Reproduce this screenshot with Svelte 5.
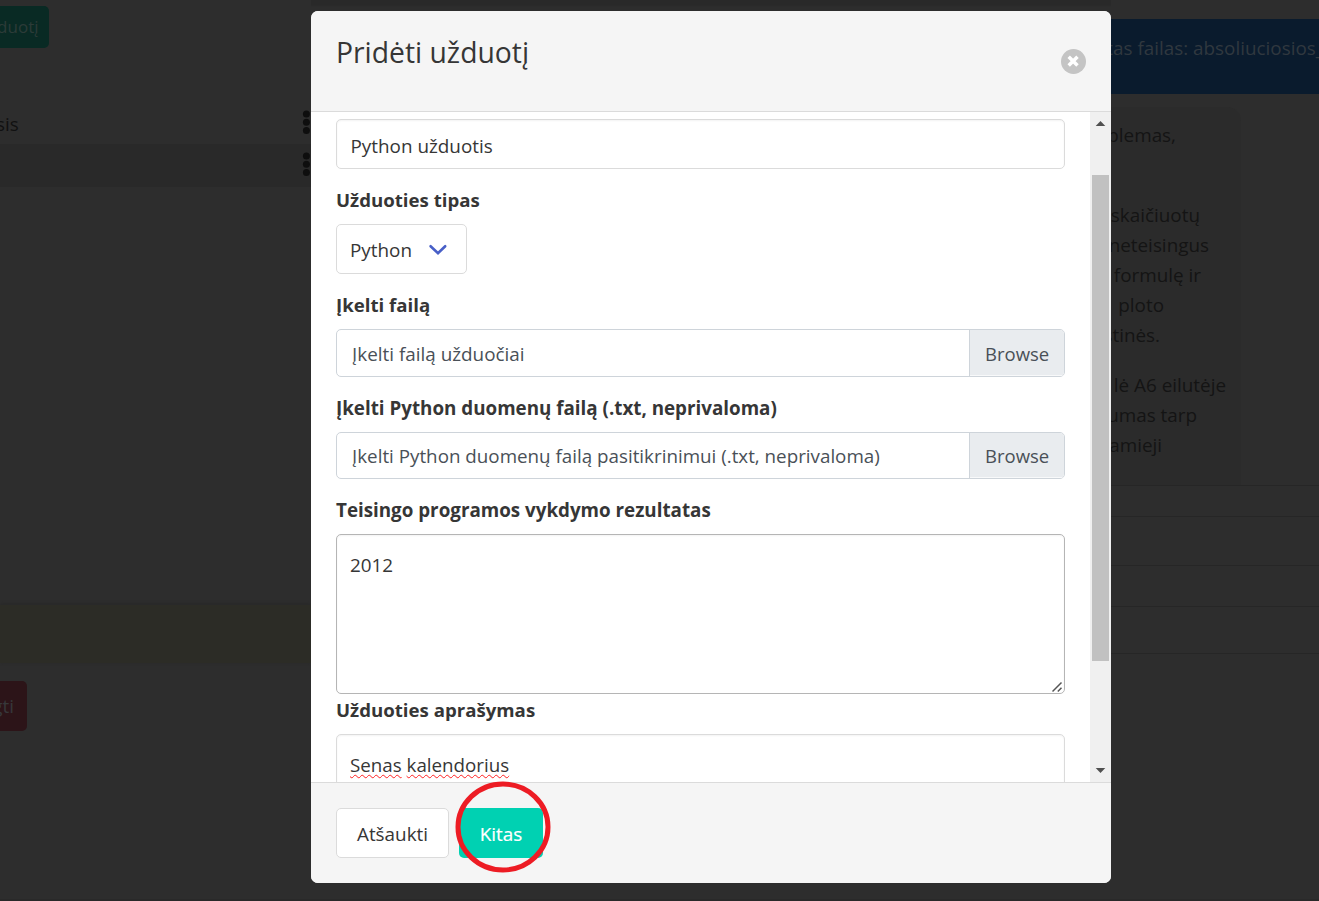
<script>
  let name = $state('Python užduotis');
  let result = $state('2012');
  const lines = [
    { text: 'problemas,', end: 1176, top: 0 },
    { text: 'skaičiuotų', end: 1200, top: 50 },
    { text: 'neteisingus', end: 1209, top: 0 },
    { text: 'formulę ir', end: 1201, top: 0 },
    { text: 'ploto', end: 1164, top: 0 },
    { text: 'stinės.', end: 1160, top: 0 },
    { text: 'lė A6 eilutėje', end: 1226, top: 20 },
    { text: 'umas tarp', end: 1197, top: 0 },
    { text: 'amieji', end: 1162, top: 0 }
  ];
  const rows = [31, 49, 41, 47];
</script>

{#snippet dots()}
  <svg class="dots" width="9" height="26" viewBox="0 0 9 26">
    <circle cx="4.4" cy="4.9" r="3.5" /><circle cx="4.4" cy="13.2" r="3.5" /><circle cx="4.4" cy="21.5" r="3.5" />
  </svg>
{/snippet}

<div class="screen">
  <aside class="left">
    <div class="add"><span>užduotį</span></div>
    <div class="item first"><span>sis</span>{@render dots()}</div>
    <div class="item active"><span></span>{@render dots()}</div>
    <div class="notice"></div>
    <div class="remove"><span>Baigti</span></div>
  </aside>

  <div class="middle">
    <div class="dialog">
      <header>
        <h1>Pridėti užduotį</h1>
        <button class="close" aria-label="Uždaryti">
          <svg width="25" height="25" viewBox="0 0 25 25">
            <circle cx="12.5" cy="12.5" r="12.5" fill="#c4c4c4" />
            <path d="M7.7 7.8 16.5 16.6M16.5 7.8 7.7 16.6" stroke="#fff" stroke-width="3.5" />
          </svg>
        </button>
      </header>
      <div class="content">
        <div class="form">
          <input class="field" type="text" bind:value={name} />
          <div class="label l1">Užduoties tipas</div>
          <div class="select"><span>Python</span>
            <svg width="20" height="14" viewBox="0 0 20 14"><path d="M2.6 3.2 10 10.3 17.2 3.2" fill="none" stroke="#485fc7" stroke-width="2.6" stroke-linecap="round" stroke-linejoin="miter" /></svg>
          </div>
          <div class="label l2">Įkelti failą</div>
          <div class="file f1"><span>Įkelti failą užduočiai</span><b>Browse</b></div>
          <div class="label l3">Įkelti Python duomenų failą (.txt, neprivaloma)</div>
          <div class="file f2"><span>Įkelti Python duomenų failą pasitikrinimui (.txt, neprivaloma)</span><b>Browse</b></div>
          <div class="label l4">Teisingo programos vykdymo rezultatas</div>
          <div class="area">
            <textarea bind:value={result}></textarea>
            <svg class="grip" width="12" height="12" viewBox="0 0 12 12"><path d="M.5 10.5 9.5 1.5M5.8 10.5 9.5 6.8" stroke="#555" stroke-width="1.5" fill="none" /></svg>
          </div>
          <div class="label l5">Užduoties aprašymas</div>
          <div class="field desc"><span class="wavy">Senas</span> <span class="wavy">kalendorius</span></div>
        </div>
        <div class="scroll">
          <svg width="19" height="19" viewBox="0 0 19 19"><path d="M5.7 14 10.5 9 15.3 14Z" fill="#505050" /></svg>
          <div class="thumb"></div>
          <svg class="down" width="19" height="19" viewBox="0 0 19 19"><path d="M5.7 5 10.5 10 15.3 5Z" fill="#505050" /></svg>
        </div>
      </div>
      <footer>
        <button class="cancel">Atšaukti</button>
        <button class="next">Kitas</button>
        <svg class="ring" width="100" height="96" viewBox="0 0 100 96"><ellipse cx="50" cy="48" rx="45" ry="43" fill="none" stroke="#ed1c24" stroke-width="5" /></svg>
      </footer>
    </div>
  </div>

  <aside class="right">
    <div class="uploaded"><span>Įkeltas failas: absoliuciosios_</span></div>
    <div class="text">
      {#each lines as line}
        <p style="margin-top: {line.top}px; margin-right: {1241 - line.end}px">{line.text}</p>
      {/each}
    </div>
    {#each rows as height}
      <div class="row" style="height: {height}px"></div>
    {/each}
  </aside>
</div>

<style>
  :global(body) { margin: 0; overflow: hidden; }
  * { box-sizing: border-box; }
  .screen { display: flex; width: 1319px; height: 901px; overflow: hidden; background: #2d2d2d; border-bottom: 2px solid #292929; font: 18.87px/30px "Open Sans", "Noto Sans", sans-serif; color: #363636; }
  button, input, textarea { font: inherit; color: inherit; margin: 0; outline: none; }
  .left { width: 311px; flex: none; padding-top: 6px; overflow: hidden; }
  .add { display: flex; justify-content: flex-end; width: 49px; height: 42px; padding: 6px 10.5px 0 0; border-radius: 0 5px 5px 0; background: #092a24; color: #2c3b38; font-size: 17px; }
  .item { display: flex; justify-content: space-between; height: 42px; color: #111; }
  .item span { margin: 7px 0 0 -4px; }
  .first { margin-top: 54px; }
  .active { background: #292929; height: 43px; }
  .dots { margin-top: 7px; fill: #0e0e0e; }
  .notice { height: 58px; margin-top: 418px; background: #2c2c26; box-shadow: 0 -1px 3px #272727; }
  .remove { display: flex; justify-content: flex-end; width: 27px; height: 50px; margin-top: 18px; padding: 10px 13px 0 0; border-radius: 0 5px 5px 0; background: #2c1418; color: #37383a; overflow: hidden; }
  .middle { width: 800px; flex: none; padding-top: 11px; background: linear-gradient(#292929 0 5px, #2d2d2d 7px); }
  .dialog { display: flex; flex-direction: column; height: 872px; border-radius: 7px; background: #fff; }
  header { display: flex; justify-content: space-between; height: 101px; padding: 22px 25px 0; border-bottom: 1px solid #dbdbdb; border-radius: 7px 7px 0 0; background: #f5f5f5; }
  h1 { margin: 0; font-size: 28.3px; line-height: 38px; font-weight: 400; }
  .close { width: 25px; height: 25px; margin-top: 16px; padding: 0; border: 0; background: none; }
  .close svg { display: block; }
  .content { display: flex; height: 670px; overflow: hidden; }
  .form { width: 779px; padding: 7px 25px 0; overflow: hidden; }
  .field { display: block; width: 729px; height: 50px; padding: 4px 13.5px 0; border: 1px solid #dbdbdb; border-radius: 5px; box-shadow: inset 0 1px 2px rgba(10, 10, 10, .05); background: #fff; }
  .label { height: 30px; font-weight: 700; font-size: 18.8px; white-space: nowrap; }
  .l1, .l2, .l3, .l4 { margin: 16px 0 9px; }
  .l5 { margin: 1px 0 9px; }
  .l1, .l2, .l5 { font-size: 18.65px; }
  .select { display: flex; width: 131px; height: 50px; padding: 10px 0 0 13px; border: 1px solid #dbdbdb; border-radius: 5px; }
  .select span { width: 78px; }
  .select svg { margin-top: 8px; }
  .file { display: flex; height: 48px; border: 1px solid #ced4da; border-radius: 5px; color: #495057; overflow: hidden; white-space: nowrap; }
  .file span { flex: 1; padding: 9px 0 0 15px; }
  .file b { width: 95px; padding: 9px 0 0 15px; border-left: 1px solid #ced4da; background: #e9ecef; font-weight: 400; font-size: 18.5px; box-shadow: inset 0 -1px #f8f9fa; }
  .f2 { height: 47px; }
  .f2 span, .f2 b { padding-top: 8px; }
  .f2 span { font-size: 18.8px; }
  .area { position: relative; height: 160px; }
  textarea { display: block; width: 729px; height: 160px; padding: 15px 13px; resize: none; border: 1px solid #b5b5b5; border-radius: 5px; box-shadow: inset 0 1px 2px rgba(10, 10, 10, .05); }
  .grip { position: absolute; right: 1px; bottom: 1px; }
  .desc { height: 70px; padding-top: 15px; padding-left: 13px; font-size: 18.75px; }
  .wavy { text-decoration: underline wavy #ff2020 1.3px; text-underline-offset: 2px; text-decoration-skip-ink: none; }
  .scroll { display: flex; flex-direction: column; width: 21px; background: #f0f0f0; }
  .thumb { width: 17px; height: 486px; margin: 44px 0 0 2px; background: #c1c1c1; }
  .down { margin-top: auto; }
  footer { position: relative; display: flex; gap: 10px; height: 101px; padding: 25px; border-top: 1px solid #dbdbdb; border-radius: 0 0 7px 7px; background: #f5f5f5; }
  footer button { height: 50px; border-radius: 5px; padding: 1px 0 0; text-align: center; }
  .cancel { width: 113px; border: 1px solid #dbdbdb; background: #fff; }
  .next { width: 84px; border: 0; background: #00d1b2; color: #fff; -webkit-text-stroke: .2px #fff; }
  .ring { position: absolute; left: 141.5px; top: -4.5px; }
  .right { width: 208px; flex: none; padding-top: 19px; overflow: hidden; }
  .uploaded { display: flex; justify-content: flex-end; height: 75px; padding: 14px 0 0; background: #0a1b2d; color: #30383f; white-space: nowrap; }
  .uploaded span { margin-right: -5px; }
  .text { width: 130px; height: 378px; margin-top: 13px; padding-top: 13px; border-radius: 0 14px 0 0; background: #2b2b2b; color: #141414; }
  .text p { display: flex; justify-content: flex-end; height: 30px; margin: 0; white-space: nowrap; }
  .row { border-top: 1px solid #262626; }
  .row:last-child { border-bottom: 1px solid #262626; min-height: 48px; }
</style>
